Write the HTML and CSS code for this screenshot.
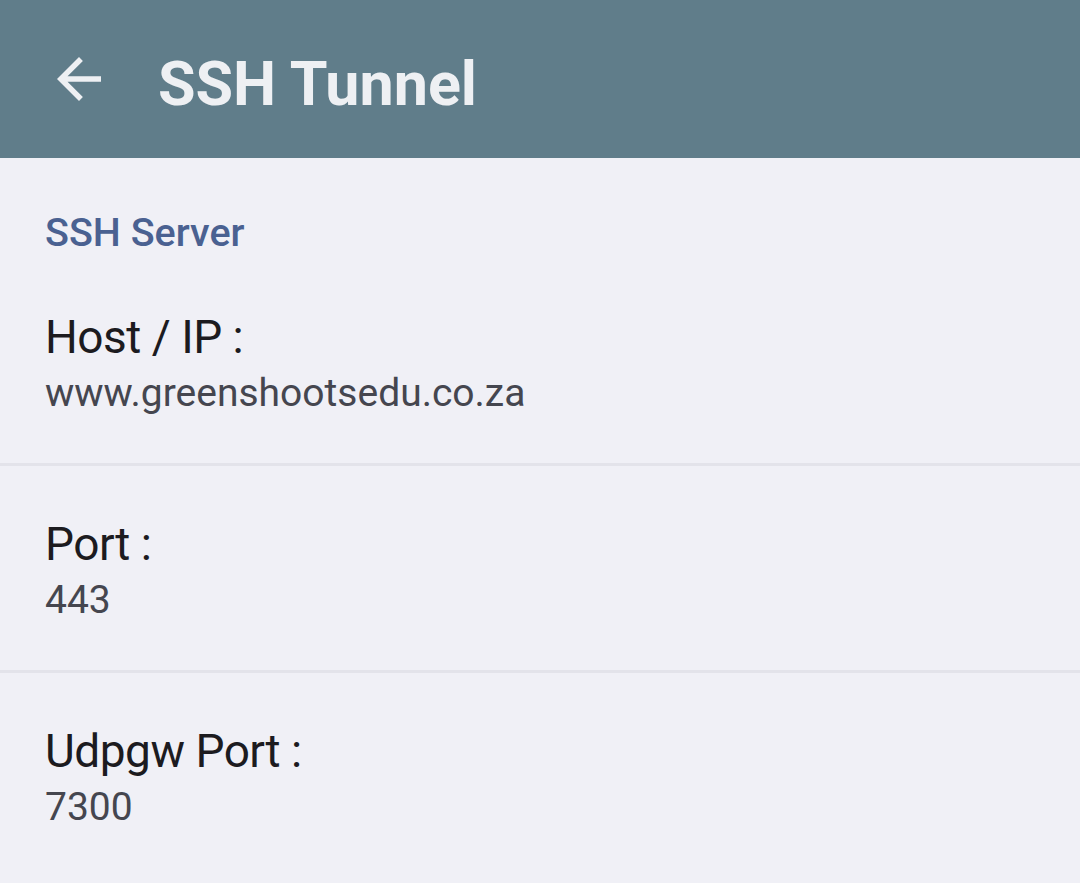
FILE: index.html
```html
<!DOCTYPE html>
<html>
<head>
<meta charset="utf-8">
<link rel="stylesheet" href="styles.css">
</head>
<body>
<header class="toolbar">
  <svg class="back" viewBox="0 0 24 24" width="66" height="66" aria-hidden="true">
    <path d="M20 11H7.83l5.59-5.59L12 4l-8 8 8 8 1.41-1.41L7.83 13H20v-2z" fill="#eef0f3"/>
  </svg>
  <h1 class="title">SSH Tunnel</h1>
</header>
<main class="prefs">
  <div class="category">SSH Server</div>
  <div class="item">
    <div class="label">Host / IP :</div>
    <div class="value">www.greenshootsedu.co.za</div>
  </div>
  <div class="item">
    <div class="label">Port :</div>
    <div class="value">443</div>
  </div>
  <div class="item">
    <div class="label">Udpgw Port :</div>
    <div class="value">7300</div>
  </div>
</main>
</body>
</html>
```

FILE: styles.css
```css
html, body {
  margin: 0;
  padding: 0;
}
body {
  background: #f0f0f6;
  font-family: Roboto, "Noto Sans", "Liberation Sans", sans-serif;
  width: 1080px;
  height: 883px;
  overflow: hidden;
}
.toolbar {
  height: 158px;
  background: #607d8a;
  display: flex;
  align-items: center;
  padding-left: 46px;
  box-sizing: border-box;
}
.back {
  display: block;
  flex: none;
}
.title {
  margin: 10px 0 0 46px;
  font-size: 61px;
  font-weight: 700;
  color: #eef0f3;
  line-height: 62px;
  letter-spacing: 0;
}
.prefs {
  display: flex;
  flex-direction: column;
}
.category {
  padding: 52px 0 3px 45px;
  font-size: 39.5px;
  line-height: 46px;
  font-weight: 500;
  color: #4a6191;
}
.item {
  padding: 51px 0 41px 45px;
  border-bottom: 3px solid #e3e3ea;
}
.item:last-child {
  border-bottom: none;
}
.label {
  font-size: 46px;
  line-height: 54px;
  letter-spacing: -0.5px;
  color: #1c1b1f;
}
.value {
  font-size: 39px;
  line-height: 58px;
  color: #45464f;
}
```
